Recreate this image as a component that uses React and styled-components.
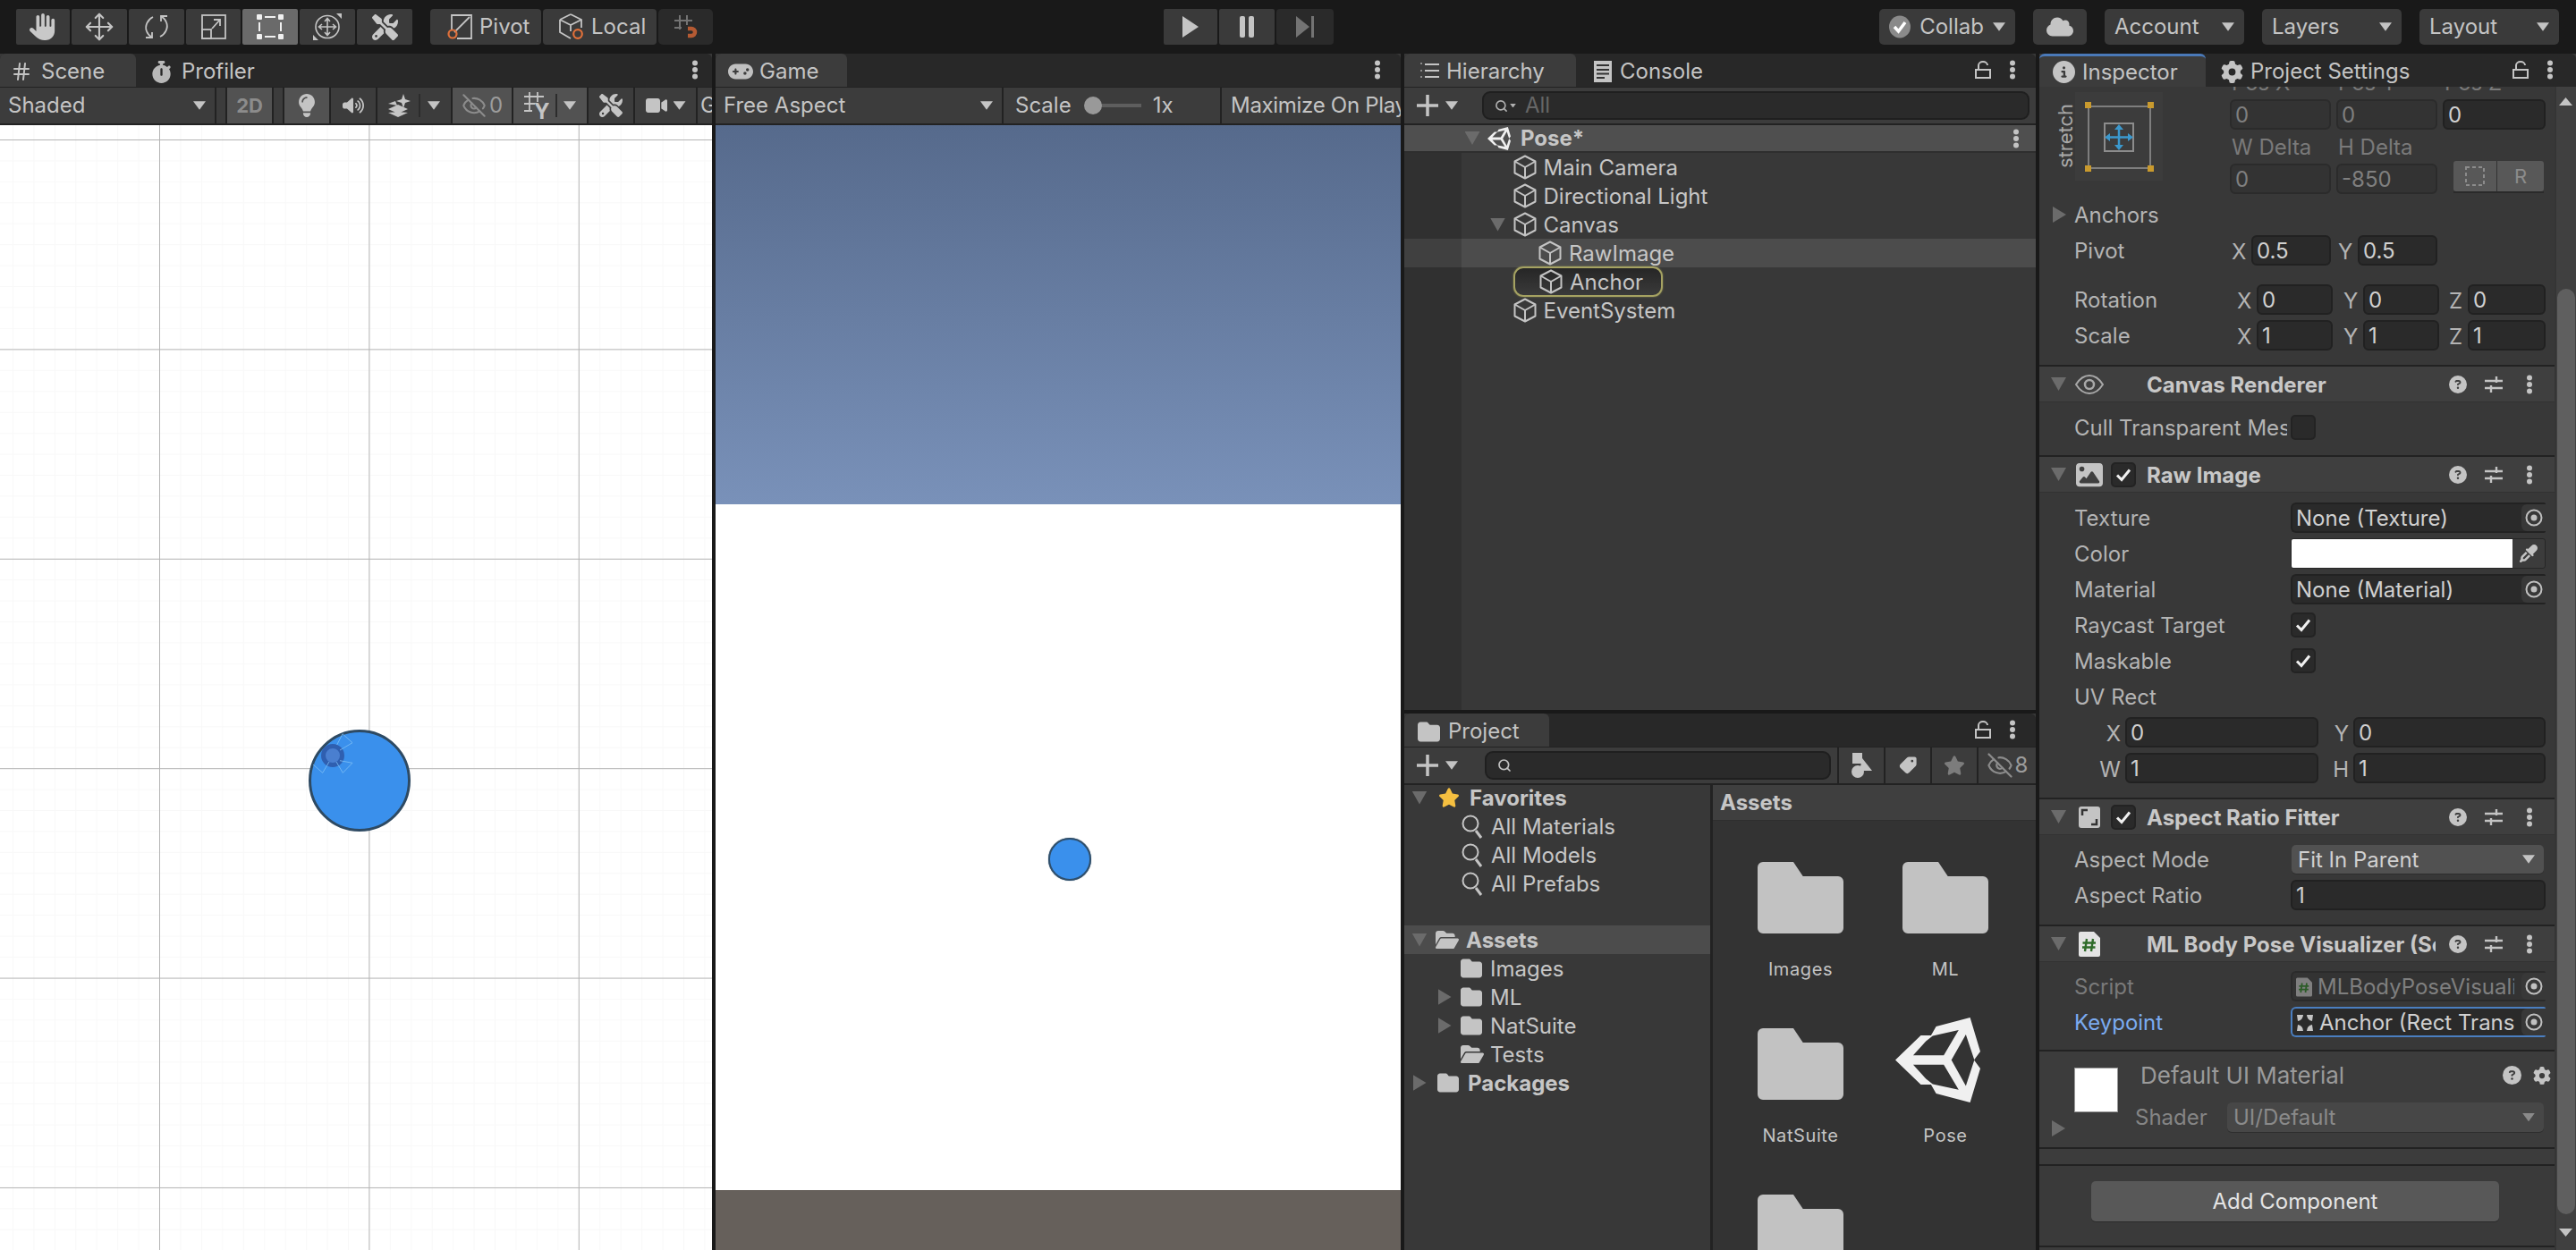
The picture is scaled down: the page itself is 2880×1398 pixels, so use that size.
import React from 'react';
import styled, { createGlobalStyle } from 'styled-components';
import { FaHand, FaScrewdriverWrench, FaCloud, FaLightbulb, FaVolumeHigh, FaVideo, FaGamepad, FaCircleInfo, FaGear, FaFolder, FaCircleQuestion, FaEyeDropper, FaImage, FaTag, FaStar, FaFolderOpen, FaStopwatch } from 'react-icons/fa6';
import { Move, Hash, EyeOff, Search } from 'lucide-react';

const Global = createGlobalStyle`
  * { box-sizing: border-box; }
  svg { flex: none; }
  html, body { margin: 0; padding: 0; background: #191919; overflow: hidden; }
  body { font-family: Inter, "Noto Sans", "Liberation Sans", sans-serif; font-size: 24px; color: #c4c4c4; }
`;

const Screen = styled.div`
  width: 2880px; height: 1398px; display: flex; flex-direction: column; background: #191919; overflow: hidden;
`;
const TopBar = styled.header`
  height: 60px; flex: none; display: flex; align-items: flex-start; padding: 10px 0 0 18px;
`;
const TopGroup = styled.div`
  display: flex; gap: ${p => p.$gap ?? 2}px; margin-left: ${p => p.$ml ?? 0}px;
`;
const TopBtn = styled.div`
  width: ${p => p.$w}px; height: 40px; display: flex; align-items: center; justify-content: ${p => p.$left ? 'flex-start' : 'center'};
  gap: 6px; padding-left: ${p => p.$pl ?? 0}px; flex: none;
  background: ${p => p.$active ? '#6a6a6a' : p.$dim ? '#2a2a2a' : '#3a3a3a'};
  border-radius: ${p => p.$r ?? 2}px; color: ${p => p.$active ? '#f0f0f0' : '#c4c4c4'}; line-height: 40px;
`;
const MenuBtn = styled(TopBtn)`
  justify-content: space-between; padding: 0 11px; border-radius: 5px;
`;
const Panels = styled.main`
  flex: 1; display: flex; gap: 4px; min-height: 0;
`;
const Panel = styled.section`
  width: ${p => p.$w}px; flex: ${p => p.$grow ? '1' : 'none'}; height: ${p => p.$h ? p.$h + 'px' : '100%'};
  min-height: 0; display: flex; flex-direction: column; overflow: hidden; position: relative; background: #383838;
`;
const Stack = styled.div`
  width: ${p => p.$w}px; flex: none; display: flex; flex-direction: column; gap: 4px; height: 100%;
`;
const TabStrip = styled.div`
  height: 37px; flex: none; display: flex; align-items: stretch; background: #282828; border-radius: 6px 6px 0 0; position: relative; z-index: 2;
`;
const Tab = styled.div`
  width: ${p => p.$w}px; flex: none; display: flex; align-items: center; gap: ${p => p.$gap ?? 9}px; padding: ${p => p.$accent ? 1 : 3}px 0 0 ${p => p.$pl ?? 14}px;
  background: ${p => p.$active ? '#3c3c3c' : 'transparent'}; border-radius: 6px 6px 0 0; white-space: nowrap; line-height: 34px;
  border-top: ${p => p.$accent ? '3px solid #4a79b8' : 'none'};
  color: #c4c4c4;
`;
const TabTools = styled.div`
  margin-left: auto; display: flex; align-items: center; gap: ${p => p.$gap ?? 17}px; padding-right: ${p => p.$pr ?? 15}px; padding-bottom: 2px;
`;
const Toolbar = styled.div`
  height: 43px; flex: none; display: flex; gap: 2px; background: ${p => p.$flat ? '#3c3c3c' : '#222'}; border-top: 1px solid #222; border-bottom: 2px solid #222; overflow: hidden; position: relative;
`;
const Cell = styled.div`
  width: ${p => p.$w ? p.$w + 'px' : 'auto'}; flex: ${p => p.$grow ? '1' : 'none'}; display: flex; align-items: center; justify-content: ${p => p.$between ? 'space-between' : p.$left ? 'flex-start' : 'center'};
  gap: ${p => p.$gap ?? 6}px; padding: ${p => p.$pad ?? '0'}; background: ${p => p.$active ? '#525252' : '#3c3c3c'}; color: #c4c4c4; white-space: nowrap; overflow: hidden; line-height: 40px;
`;
const TwoD = styled.span`font-weight: 700; color: #8c8c8c; font-size: 22px;`;
const Count = styled.span`color: #9c9c9c;`;
const VSep = styled.i`width: 2px; height: 26px; background: #2c2c2c; display: block;`;
const TightText = styled.span`letter-spacing: -.3px;`;

const Caret = styled.i`
  display: block; flex: none; width: ${p => p.$s ?? 14}px; height: ${p => (p.$s ?? 14) * 0.68}px; background: ${p => p.$c ?? '#c4c4c4'};
  clip-path: polygon(0 0, 100% 0, 50% 100%);
`;
const Fold = styled.i`
  display: block; flex: none; background: #6b6b6b;
  width: ${p => p.$right ? 15 : 17}px; height: ${p => p.$right ? 18 : 15}px;
  clip-path: ${p => p.$right ? 'polygon(0 0, 100% 50%, 0 100%)' : 'polygon(0 0, 100% 0, 50% 100%)'};
`;

/* Scene view */
const SceneCanvas = styled.div`
  flex: 1; position: relative; overflow: hidden; background-color: #fff;
  background-image:
    linear-gradient(to right, #b4b4b4 1px, transparent 1px),
    linear-gradient(to bottom, #b4b4b4 1px, transparent 1px),
    linear-gradient(to right, #f8f8f8 1px, transparent 1px),
    linear-gradient(to bottom, #f8f8f8 1px, transparent 1px);
  background-size: 234.4px 234.4px, 234.4px 234.4px, 23.44px 23.44px, 23.44px 23.44px;
  background-position: 178px 16px, 178px 16px, 14px 16px, 14px 16px;
`;
const SceneBall = styled.svg`position: absolute; left: 340px; top: 670px;`;

/* Game view */
const GameView = styled.div`flex: 1; display: flex; flex-direction: column; min-height: 0;`;
const Sky = styled.div`height: 424px; flex: none; background: linear-gradient(#566a8c, #7991b9);`;
const Board = styled.div`height: 767px; flex: none; background: #fff; position: relative;`;
const Ground = styled.div`flex: 1; background: #66605b;`;
const GameBall = styled.div`
  position: absolute; left: 372px; top: 373px; width: 48px; height: 48px; border-radius: 50%;
  background: #3a90ec; border: 2px solid #2f4f6c; box-shadow: 0 0 1px #2f4f6c;
`;
const ScaleTrack = styled.div`width: 50px; height: 4px; background: #5e5e5e; margin-left: -6px; margin-right: 6px;`;
const Knob = styled.i`display:block; width: 20px; height: 20px; border-radius: 50%; background: #999; margin-left: 14px; flex: none; z-index: 1;`;
const ScaleValue = styled.span`margin-left: 7px;`;

/* Hierarchy */
const SearchBox = styled.div`
  position: absolute; left: ${p => p.$l}px; top: ${p => p.$t}px; width: ${p => p.$w}px; height: ${p => p.$h}px; display: flex; align-items: center; gap: 2px; padding-left: 12px;
  background: #2a2a2a; border: 2px solid #1f1f1f; border-radius: 9px; color: #666; line-height: 28px;
`;
const SearchText = styled.span`margin-left: 8px;`;
const PlusBtn = styled.div`
  display: flex; align-items: center; gap: 8px; padding-left: 14px; color: #c4c4c4;
`;
const HierList = styled.div`
  flex: 1; background: linear-gradient(to right, #303030 64px, #383838 64px);
`;
const HierRow = styled.div`
  height: ${p => p.$scene ? 31 : 32}px; display: flex; align-items: center; padding-left: ${p => 66 + (p.$depth ?? 0) * 28.5}px; position: relative;
  background: ${p => p.$scene ? '#4f4f4f' : p.$hover ? 'linear-gradient(to right, #404040 64px, #4c4c4c 64px)' : 'transparent'};
  border-bottom: ${p => p.$scene ? '2px solid #2e2e2e' : 'none'};
  font-weight: ${p => p.$scene ? 700 : 400}; white-space: nowrap; color: #c6c6c6;
`;
const FoldSlot = styled.div`width: 20px; flex: none; display: flex; justify-content: center;`;
const RowIcon = styled.div`margin-left: 7px; width: 26px; flex: none; display: flex; justify-content: center; align-items: center; margin-right: ${p => p.$mr ?? 8}px;`;
const PingPill = styled.div`
  display: flex; align-items: center; height: 34px; width: 167px; border: 2px solid #a5a262; border-radius: 11px; box-shadow: 0 0 2px #8a8850;
  background: linear-gradient(#262626, #3a3a3a); margin-left: -1px;
`;
const RowDots = styled.div`position: absolute; right: 18px; top: 3px;`;

/* Project */
const ProjectBody = styled.div`flex: 1; display: flex; min-height: 0; background: #383838;`;
const TreeCol = styled.div`width: 345px; flex: none; border-right: 3px solid #222;`;
const TreeInner = styled.div`margin-top: -2px;`;
const TreeRow = styled.div`
  height: 32px; display: flex; align-items: center; padding-left: ${p => p.$pl}px; white-space: nowrap; gap: ${p => p.$gap ?? 7}px;
  background: ${p => p.$hover ? '#4c4c4c' : 'transparent'}; font-weight: ${p => p.$bold ? 700 : 400}; color: #c6c6c6;
`;
const TreeSpacer = styled.div`height: 31px;`;
const FoldBox = styled.div`width: ${p => p.$w ?? 20}px; flex: none; display: flex; justify-content: center;`;
const AssetCol = styled.div`flex: 1; display: flex; flex-direction: column; background: #333; min-width: 0;`;
const AssetHead = styled.div`height: 40px; flex: none; background: #3f3f3f; padding-left: 8px; line-height: 40px; font-weight: 700; border-bottom: 1px solid #2e2e2e; color: #c6c6c6;`;
const AssetGrid = styled.div`display: grid; grid-template-columns: repeat(2, 162px); grid-auto-rows: 186px; padding: 46px 0 0 17px;`;
const AssetTile = styled.div`display: flex; flex-direction: column; align-items: center;`;
const AssetIcon = styled.div`height: 80px; display: flex; align-items: center; justify-content: center; padding-bottom: ${p => p.$logo ? 9 : 0}px; margin-right: ${p => p.$logo ? 17 : 0}px;`;
const AssetLabel = styled.div`margin-top: 26px; line-height: 28px; font-size: 20px; letter-spacing: .6px; color: #c4c4c4;`;
const ToolGap = styled.div`margin-left: auto; display: flex; gap: 2px;`;

/* Inspector */
const InspectorBody = styled.div`flex: 1; display: flex; min-height: 0; overflow: hidden;`;
const InspectorCol = styled.div`width: 576px; flex: none; background: #383838; overflow: hidden; display: flex; flex-direction: column;`;
const ScrollRail = styled.div`
  flex: 1; background: #404040; border-left: 2px solid #353535; display: flex; flex-direction: column; align-items: center; padding-top: 226px; position: relative;
`;
const ScrollThumb = styled.div`width: 20px; height: 1035px; background: #5f5f5f; border-radius: 10px;`;
const ScrollArrow = styled.i`
  position: absolute; left: 3px; ${p => p.$up ? 'top: 12px' : 'bottom: 15px'}; width: 15px; height: 9px; background: #c4c4c4;
  clip-path: ${p => p.$up ? 'polygon(50% 0, 100% 100%, 0 100%)' : 'polygon(0 0, 100% 0, 50% 100%)'};
`;
const TransformTop = styled.div`display: flex; height: 120px; flex: none;`;
const PresetCol = styled.div`width: 213px; flex: none; position: relative; overflow: hidden;`;
const StretchClip = styled.div`
  position: absolute; left: 54px; top: -22px; width: 70px; line-height: 26px; text-align: center; font-size: 22px; color: #a0a0a0;
`;
const StretchSide = styled.div`
  position: absolute; left: 14px; top: 41px; width: 30px; height: 28px; line-height: 28px; white-space: nowrap; font-size: 22px; color: #a8a8a8; display: flex; justify-content: center; transform: rotate(-90deg);
`;
const PresetBox = styled.div`position: absolute; left: 40px; top: 6px; width: 98px; height: 99px; background: #3c3c3c;`;
const PresetIcon = styled.svg`display: block;`;
const FieldsCol = styled.div`width: 353px; flex: none; display: flex; flex-direction: column;`;
const ClipLabels = styled.div`height: 14px; overflow: hidden; display: flex; color: #7a7a7a; line-height: 24px; flex: none;`;
const ClipLabel = styled.span`width: ${p => p.$w}px; margin-top: -16px; padding-left: 2px; height: 24px;`;
const FieldRow = styled.div`display: flex; gap: 6px; height: 34px; flex: none;`;
const DeltaLabels = styled.div`height: 38px; display: flex; align-items: center; color: #7a7a7a; padding-left: 2px; flex: none;`;
const DeltaLabel = styled.span`width: 119px;`;
const Field = styled.div`
  width: ${p => p.$w ? p.$w + 'px' : 'auto'}; flex: ${p => p.$grow ? 1 : 'none'}; height: 34px; line-height: 31px; padding-left: ${p => p.$pl ?? 4}px;
  background: ${p => p.$off ? '#333' : '#2a2a2a'}; border: 2px solid ${p => p.$off ? '#2b2b2b' : '#212121'}; border-radius: 6px; color: ${p => p.$off ? '#7f7f7f' : '#d0d0d0'};
  white-space: nowrap; overflow: hidden;
`;
const RectBtns = styled.div`display: flex; margin-left: 12px; margin-top: -3px; height: 36px; border-bottom: 2px solid #2a2a2a;`;
const RectBtn = styled.div`
  width: ${p => p.$w}px; display: flex; align-items: center; justify-content: center; background: #585858; color: #8c8c8c; border-radius: ${p => p.$r ?? '3px'}; font-size: 22px;
  border-left: ${p => p.$split ? '1px solid #333' : 'none'};
`;
const Rows = styled.div`display: flex; flex-direction: column; gap: ${p => p.$gap ?? 6}px; padding: ${p => p.$pad ?? '0'}; flex: none;`;
const Row = styled.div`
  height: ${p => p.$h ?? 34}px; display: flex; align-items: center; padding-left: ${p => p.$pl ?? 39}px; padding-right: 10px; margin-top: ${p => p.$mt ?? 0}px; flex: none; position: relative;
`;
const Label = styled.div`
  width: ${p => p.$w ?? 242}px; flex: none; white-space: nowrap; overflow: hidden; color: ${p => p.$c ?? '#b4b4b4'}; line-height: 34px; margin: 2px ${p => p.$mr ?? 0}px 0 0;
`;
const Axis = styled.div`
  width: ${p => p.$w ?? 22}px; flex: none; color: #b4b4b4; margin: 2px 0 0 ${p => p.$ml ?? 0}px; text-align: ${p => p.$end ? 'right' : 'left'}; padding-right: ${p => p.$end ? 5 : 0}px;
`;
const AnchorsFold = styled.div`position: absolute; left: 15px; top: 9px;`;
const Spacer = styled.div`height: ${p => p.$h}px; flex: none;`;
const Divider = styled.div`height: 2px; flex: none; background: #222;`;
const CompHead = styled.div`
  height: ${p => p.$h ?? 40}px; flex: none; display: flex; align-items: center; background: #3f3f3f; border-bottom: 1px solid #323232;
`;
const HeadFold = styled.div`width: 36px; flex: none; padding-left: 13px;`;
const HeadIcon = styled.div`width: 40px; flex: none; display: flex; justify-content: center; align-items: center;`;
const HeadCheckSlot = styled.div`width: 44px; flex: none; padding-left: 4px;`;
const HeadTitle = styled.div`
  width: 323px; flex: none; font-weight: 700; color: #c8c8c8; white-space: nowrap; overflow: hidden; margin: 2px 5px 0 0;
`;
const HeadAct = styled.div`width: 40px; flex: none; display: flex; justify-content: center; align-items: center;`;
const Check = styled.div`
  width: 28px; height: 28px; flex: none; background: #2a2a2a; border: 2px solid #232323; border-radius: 5px; display: flex; align-items: center; justify-content: center;
`;
const ObjField = styled.div`
  width: 285px; height: 34px; flex: none; display: flex; align-items: stretch; background: ${p => p.$off ? '#333' : '#2a2a2a'};
  border: 2px solid ${p => p.$focus ? '#4a7ec0' : p.$off ? '#2b2b2b' : '#222'}; border-right: none; border-radius: 6px 2px 2px 6px; overflow: hidden; color: ${p => p.$off ? '#7f7f7f' : '#d0d0d0'};
`;
const ObjValue = styled.div`flex: 1; padding: 2px 0 0 4px; margin-right: 8px; line-height: 30px; white-space: nowrap; overflow: hidden; display: flex; align-items: center; gap: 6px; min-width: 0;`;
const ObjPick = styled.div`width: 27px; flex: none; background: #383838; border-radius: 6px 0 0 6px; display: flex; align-items: center; justify-content: center;`;
const ColorField = styled.div`
  width: 285px; height: 34px; flex: none; display: flex; background: #3c3c3c; border: 1px solid #262626; border-radius: 3px; overflow: hidden;
`;
const Swatch = styled.div`width: 247px; background: #fff;`;
const Dropper = styled.div`flex: 1; display: flex; align-items: center; justify-content: center;`;
const Dropdown = styled.div`
  width: ${p => p.$w ?? 282}px; height: ${p => p.$h ?? 32}px; flex: none; display: flex; align-items: center; justify-content: space-between; padding: 0 10px 0 7px; margin-left: ${p => p.$ml ?? 0}px;
  background: ${p => p.$off ? '#474747' : '#515151'}; border-radius: 5px; color: ${p => p.$off ? '#8a8a8a' : '#d0d0d0'};
  box-shadow: 0 1px 0 #2e2e2e; white-space: nowrap;
`;
const MatBlock = styled.div`height: 107px; flex: none; background: #3c3c3c; position: relative;`;
const MatThumb = styled.div`position: absolute; left: 39px; top: 18px; width: 49px; height: 50px; background: #fff; border: 1px solid #999;`;
const MatTitle = styled.div`position: absolute; left: 113px; top: 9px; line-height: 36px; font-size: 26px; color: #9a9a9a;`;
const MatActions = styled.div`position: absolute; right: 4px; top: 16px; display: flex; gap: 13px; align-items: center;`;
const MatFold = styled.div`position: absolute; left: 14px; top: 77px;`;
const ShaderRow = styled.div`position: absolute; left: 107px; top: 57px; display: flex; align-items: center;`;
const ShaderLabel = styled.div`width: 103px; color: #858585;`;
const BlankBlock = styled.div`height: 17px; flex: none; background: #3c3c3c;`;
const AddArea = styled.div`flex: 1; padding: 17px 0 0 58px; background: #3a3a3a;`;
const AddBtn = styled.div`
  width: 456px; height: 45px; display: flex; align-items: center; justify-content: center; background: #585858; border-radius: 5px; color: #e4e4e4; box-shadow: 0 1px 0 #2c2c2c;
`;
const InspectorFoot = styled.div`height: 5px; flex: none; background: #3c3c3c; border-top: 2px solid #222;`;

/* ---------- drawings ---------- */
const Dots = ({ c = '#c4c4c4' }) => (
  <svg width="8" height="22" viewBox="0 0 8 22"><circle cx="4" cy="3.5" r="3" fill={c} /><circle cx="4" cy="11" r="3" fill={c} /><circle cx="4" cy="18.5" r="3" fill={c} /></svg>
);
const Lock = () => (
  <svg width="18" height="20" viewBox="0 0 18 20" fill="none" stroke="#c4c4c4" strokeWidth="2"><rect x="1" y="10" width="16" height="9" /><path d="M4 10V5a5 4 0 0 1 10 0" /></svg>
);
const Cube = () => (
  <svg width="26" height="28" viewBox="0 0 26 28" fill="none" stroke="#c4c4c4" strokeWidth="2" strokeLinejoin="round"><path d="M13 1.5L24.5 7.5V20.5L13 26.5L1.5 20.5V7.5Z" /><path d="M1.5 7.5L13 14L24.5 7.5M13 14V26.5" /></svg>
);
const UnityLogo = ({ s = 96, c = '#f0f0f0' }) => (
  <svg width={s} height={s} viewBox="0 0 100 100"><path fillRule="evenodd" fill={c} d="M0 50L30 21H42L48 10.5L88 0L100 40L92.6 50L100 60L88 100L48 89.5L42 79H30ZM21 44.5H57L74.5 14.7L44 21.5L36 28ZM83 20L66 50L83 80.5L93 50ZM21 55.5L36 72L44 78.5L74.5 85L57 55.5Z" /></svg>
);
const BigFolder = () => (
  <svg width="96" height="80" viewBox="0 0 96 80"><path fill="#c2c2c2" d="M6 0H40L50.7 16H90a6 6 0 0 1 6 6V74a6 6 0 0 1-6 6H6a6 6 0 0 1-6-6V6a6 6 0 0 1 6-6Z" /></svg>
);
const Help = ({ s = 20 }) => <FaCircleQuestion size={s} color="#c4c4c4" />;
const Sliders = () => (
  <svg width="22" height="20" viewBox="0 0 22 20" fill="none" stroke="#c4c4c4" strokeWidth="2.4"><path d="M1 6H21M1 14H21M14 1V8M8 11V19" /></svg>
);
const Target = () => (
  <svg width="20" height="20" viewBox="0 0 20 20"><circle cx="10" cy="10" r="8.5" fill="none" stroke="#c0c0c0" strokeWidth="2" /><circle cx="10" cy="10" r="3.5" fill="#c0c0c0" /></svg>
);
const Tick = ({ s = 18 }) => (
  <svg width={s} height={s} viewBox="0 0 18 18" fill="none" stroke="#f0f0f0" strokeWidth="3"><path d="M2 9.5L7 14.5L16 3.5" /></svg>
);
const Mag = () => (
  <svg width="24" height="28" viewBox="0 0 24 28" fill="none" stroke="#c4c4c4" strokeWidth="2"><circle cx="10" cy="11" r="8.5" /><path d="M16 19L22 27" strokeWidth="3" /></svg>
);
const EyeCross = ({ w = 28, c = '#8c8c8c' }) => <EyeOff size={w} color={c} strokeWidth={1.8} />;
const ScriptIcon = ({ w = 24, h = 28, bg = '#e4e4e4', fg = '#2f6b2a' }) => (
  <svg width={w} height={h} viewBox="0 0 24 28"><path fill={bg} d="M2 0H17L24 7V26a2 2 0 0 1-2 2H2a2 2 0 0 1-2-2V2a2 2 0 0 1 2-2Z" /><path fill="none" stroke={fg} strokeWidth="2.4" d="M9 8L7 22M16 8L14 22M4.5 12.5H19M4 17.5H18.5" /></svg>
);

const RotateTool = () => (
  <svg width="28" height="28" viewBox="0 0 28 28" fill="none" stroke="#c4c4c4" strokeWidth="1.8"><path d="M10 3C4 6 .5 13 3 19C4 22 6 24 9 26" /><path d="M2 26H9V20" /><path d="M18 25C24 22 27.5 15 25 9C24 6 22 4 19 2" /><path d="M26 2H19V8" /></svg>
);
const ScaleTool = () => (
  <svg width="28" height="28" viewBox="0 0 28 28" fill="none" stroke="#c4c4c4" strokeWidth="1.8"><rect x="1" y="1" width="26" height="26" /><rect x="1" y="17" width="10" height="10" /><path d="M12 16L21 6M14 6H21V13" /></svg>
);
const RectTool = () => (
  <svg width="30" height="28" viewBox="0 0 30 28" fill="#f0f0f0"><rect x="0" y="0" width="6" height="6" rx="1" /><rect x="24" y="0" width="6" height="6" rx="1" /><rect x="0" y="22" width="6" height="6" rx="1" /><rect x="24" y="22" width="6" height="6" rx="1" /><path d="M9 2h12v2H9zM9 24h12v2H9zM2 9h2v10H2zM26 9h2v10h-2z" /></svg>
);
const TransformTool = () => (
  <svg width="34" height="30" viewBox="0 0 34 30" fill="none" stroke="#c4c4c4" strokeWidth="1.6"><ellipse cx="17" cy="15" rx="13" ry="12.5" /><path d="M17 6V24M8 15H26M14 9L17 5.5L20 9M14 21L17 24.5L20 21M11 12L7.5 15L11 18M23 12L26.5 15L23 18" /><path fill="#c4c4c4" stroke="none" d="M27 0H33V6ZM1 24L7 30H1Z" /></svg>
);
const PivotIcon = () => (
  <svg width="30" height="28" viewBox="0 0 30 28" fill="none"><path d="M5 18V1H27V27H11" stroke="#c4c4c4" strokeWidth="1.8" /><path d="M8 20L25 3" stroke="#c4c4c4" strokeWidth="1.8" /><circle cx="6" cy="22" r="4.5" stroke="#e0703a" strokeWidth="2.2" /></svg>
);
const LocalIcon = () => (
  <svg width="30" height="30" viewBox="0 0 30 30" fill="none" stroke="#c4c4c4" strokeWidth="1.8"><path d="M13 1L25 7V16M1 7L13 1M1 7V21L13 28M1 7L13 13L25 7M13 13V20" /><circle cx="21" cy="23" r="4.8" stroke="#e0703a" strokeWidth="2.2" /></svg>
);
const SnapIcon = () => (
  <svg width="28" height="28" viewBox="0 0 28 28" fill="none"><path d="M7 1V17M15 1V12M1 7H21M1 15H9" stroke="#737373" strokeWidth="2" /><path d="M16 16H20A4 4 0 0 1 20 24H16" stroke="#b45a33" strokeWidth="4.5" /></svg>
);
const PlayIcon = () => <svg width="18" height="24" viewBox="0 0 18 24"><path fill="#c4c4c4" d="M0 0L18 12L0 24Z" /></svg>;
const PauseIcon = () => <svg width="16" height="24" viewBox="0 0 16 24"><rect x="0" y="0" width="6" height="24" rx="2" fill="#c4c4c4" /><rect x="10" y="0" width="6" height="24" rx="2" fill="#c4c4c4" /></svg>;
const StepIcon = () => <svg width="20" height="24" viewBox="0 0 20 24"><path fill="#737373" d="M0 0L15 12L0 24Z" /><rect x="17" y="0" width="3" height="24" fill="#737373" /></svg>;
const CollabIcon = () => (
  <svg width="24" height="26" viewBox="0 0 24 26"><ellipse cx="12" cy="13" rx="12" ry="12.5" fill="#8a8a8a" /><path d="M6 13L10.5 18L18 8" fill="none" stroke="#fff" strokeWidth="3.5" /></svg>
);
const FxIcon = () => (
  <svg width="26" height="26" viewBox="0 0 26 26" fill="#c4c4c4"><path d="M11 12L22 17L11 22L0 17ZM11 20L22 21L11 26L0 21Z" /><path d="M17 0L19 6L25 8L19 10L17 16L15 10L9 8L15 6Z" /><path d="M0 11L8 8L10 13Z" /></svg>
);
const GridY = () => (
  <svg width="28" height="32" viewBox="0 0 28 32"><path d="M6 1V22M15 1V12M0 6H22M0 14H12M0 22H9" fill="none" stroke="#c4c4c4" strokeWidth="1.8" /><text x="11" y="31" fontFamily="Inter, sans-serif" fontWeight="700" fontSize="24" fill="#c4c4c4">Y</text></svg>
);
const ConsoleIcon = () => (
  <svg width="20" height="24" viewBox="0 0 20 24"><rect width="20" height="24" fill="#c4c4c4" /><path d="M3 5H17M3 10H17M3 14.5H17M3 19H12" stroke="#333" strokeWidth="1.8" /></svg>
);
const HierIcon = () => (
  <svg width="22" height="20" viewBox="0 0 22 20"><path d="M6 2H22M6 9H22M6 16H22" stroke="#c4c4c4" strokeWidth="2" /><path d="M1 1H3M1 9H3M1 16H3" stroke="#8a8a8a" strokeWidth="2" /></svg>
);
const PlusIcon = () => (
  <svg width="24" height="24" viewBox="0 0 24 24"><path d="M12 0V24M0 12H24" stroke="#c4c4c4" strokeWidth="3.5" /></svg>
);
const EyeIcon = () => (
  <svg width="32" height="22" viewBox="0 0 32 22" fill="none" stroke="#a8a8a8" strokeWidth="2"><path d="M1 11C6 3 11 1 16 1S26 3 31 11C26 19 21 21 16 21S6 19 1 11Z" /><circle cx="16" cy="11" r="5" strokeWidth="2.5" /></svg>
);
const AspectIcon = () => (
  <svg width="24" height="24" viewBox="0 0 24 24"><rect width="24" height="24" rx="3" fill="#c4c4c4" /><path d="M4 10V4H10M20 14V20H14" fill="none" stroke="#333" strokeWidth="2.5" /></svg>
);
const AnchorMark = () => (
  <svg width="20" height="22" viewBox="0 0 20 22" fill="#c4c4c4"><path d="M1 2L8 2A7 7 0 0 1 2 9ZM19 2L12 2A7 7 0 0 0 18 9ZM1 20L8 20A7 7 0 0 0 2 13ZM19 20L12 20A7 7 0 0 1 18 13Z" /></svg>
);
const TypeFilter = () => (
  <svg width="24" height="28" viewBox="0 0 24 28" fill="#c4c4c4"><rect x="2" y="0" width="11" height="12" /><path d="M13 6L24 20H10Z" /><circle cx="8" cy="21" r="7" /></svg>
);
const OpenMark = () => <FaFolderOpen size={26} color="#c4c4c4" />;
const MiniFolder = () => <FaFolder size={24} color="#c4c4c4" />;
const RectSelect = () => (
  <svg width="22" height="22" viewBox="0 0 22 22" fill="none" stroke="#8c8c8c" strokeWidth="2" strokeDasharray="4 3"><rect x="1" y="1" width="20" height="20" /></svg>
);
const TagIcon = styled(FaTag)`transform: rotate(90deg);`;

const HierItem = ({ depth, name, fold, hover }) => (
  <HierRow $depth={depth} $hover={hover}>
    <FoldSlot>{fold && <Fold />}</FoldSlot>
    <RowIcon><Cube /></RowIcon>
    {name}
  </HierRow>
);

const Prop = ({ name, children, c, lw }) => (
  <Row><Label $c={c} $w={lw}>{name}</Label>{children}</Row>
);
const ObjProp = ({ name, icon, value, off, focus, c }) => (
  <Prop name={name} c={c}>
    <ObjField $off={off} $focus={focus}>
      <ObjValue>{icon}{value}</ObjValue>
      <ObjPick><Target /></ObjPick>
    </ObjField>
  </Prop>
);
const Header = ({ icon, checked, title }) => (
  <CompHead>
    <HeadFold><Fold /></HeadFold>
    <HeadIcon>{icon}</HeadIcon>
    <HeadCheckSlot>{checked && <Check><Tick /></Check>}</HeadCheckSlot>
    <HeadTitle>{title}</HeadTitle>
    <HeadAct><Help /></HeadAct>
    <HeadAct><Sliders /></HeadAct>
    <HeadAct><Dots /></HeadAct>
  </CompHead>
);

export default function App() {
  return (
    <Screen>
      <Global />
      <TopBar>
        <TopGroup>
          <TopBtn $w={60}><FaHand size={30} color="#c8c8c8" /></TopBtn>
          <TopBtn $w={62}><Move size={34} strokeWidth={1.5} color="#c4c4c4" /></TopBtn>
          <TopBtn $w={62}><RotateTool /></TopBtn>
          <TopBtn $w={61}><ScaleTool /></TopBtn>
          <TopBtn $w={62} $active><RectTool /></TopBtn>
          <TopBtn $w={62}><TransformTool /></TopBtn>
          <TopBtn $w={62}><FaScrewdriverWrench size={29} color="#c8c8c8" /></TopBtn>
        </TopGroup>
        <TopGroup $ml={20}>
          <TopBtn $w={124} $left $pl={19} $r={4}><PivotIcon />Pivot</TopBtn>
          <TopBtn $w={127} $left $pl={18} $r={4}><LocalIcon />Local</TopBtn>
          <TopBtn $w={61} $dim $r={5}><SnapIcon /></TopBtn>
        </TopGroup>
        <TopGroup $ml={504}>
          <TopBtn $w={60}><PlayIcon /></TopBtn>
          <TopBtn $w={62}><PauseIcon /></TopBtn>
          <TopBtn $w={64} $dim $r={4}><StepIcon /></TopBtn>
        </TopGroup>
        <TopGroup $ml={610} $gap={20}>
          <MenuBtn $w={152}><CollabIcon /><span>Collab</span><Caret /></MenuBtn>
          <TopBtn $w={60} $r={5}><FaCloud size={30} color="#c4c4c4" /></TopBtn>
          <MenuBtn $w={156}><span>Account</span><Caret /></MenuBtn>
          <MenuBtn $w={156}><span>Layers</span><Caret /></MenuBtn>
          <MenuBtn $w={156}><span>Layout</span><Caret /></MenuBtn>
        </TopGroup>
      </TopBar>
      <Panels>
        <Panel $w={796}>
          <TabStrip>
            <Tab $w={152} $active $gap={10} $pl={12}><Hash size={24} color="#c4c4c4" />Scene</Tab>
            <Tab $w={180} $pl={16} $gap={10}><FaStopwatch size={25} color="#b8b8b8" />Profiler</Tab>
            <TabTools><Dots /></TabTools>
          </TabStrip>
          <Toolbar>
            <Cell $w={240} $between $pad="0 10px 0 9px"><span>Shaded</span><Caret /></Cell>
            <Cell $w={10} />
            <Cell $w={50} $active><TwoD>2D</TwoD></Cell>
            <Cell $w={10} />
            <Cell $w={50} $active><FaLightbulb size={26} color="#c4c4c4" /></Cell>
            <Cell $w={50}><FaVolumeHigh size={24} color="#c4c4c4" /></Cell>
            <Cell $w={82} $gap={8}><FxIcon /><VSep /><Caret /></Cell>
            <Cell $w={66} $active $gap={3}><EyeCross /><Count>0</Count></Cell>
            <Cell $w={82} $active $gap={7}><GridY /><VSep /><Caret /></Cell>
            <Cell $w={50}><FaScrewdriverWrench size={26} color="#c4c4c4" /></Cell>
            <Cell $w={68} $gap={7}><FaVideo size={24} color="#c4c4c4" /><Caret /></Cell>
            <Cell $grow $left $pad="0 0 0 3px"><span>Gizmos</span></Cell>
          </Toolbar>
          <SceneCanvas>
            <SceneBall width="124" height="124" viewBox="0 0 124 124">
              <circle cx="62" cy="63" r="55.5" fill="#3a90ec" stroke="#2e4a63" strokeWidth="3" />
              <circle cx="32" cy="35" r="10.5" fill="#4a7fd0" stroke="#2f5fb0" strokeWidth="5" />
              <path d="M36.7 23L43 10.7L54 20.7L40 29M40 40.7L54 43.3L43.3 54.3L36 42M10 45L20.7 54.3L28 42" fill="none" stroke="#7fc0f5" strokeWidth="0.8" />
            </SceneBall>
          </SceneCanvas>
        </Panel>
        <Panel $w={766}>
          <TabStrip>
            <Tab $w={147} $active $pl={14} $gap={7}><FaGamepad size={28} color="#c0c0c0" />Game</Tab>
            <TabTools $pr={22}><Dots /></TabTools>
          </TabStrip>
          <Toolbar>
            <Cell $w={320} $between $pad="0 10px 0 9px"><span>Free Aspect</span><Caret /></Cell>
            <Cell $w={242} $left $pad="0 0 0 13px" $gap={0}>
              <span>Scale</span><Knob /><ScaleTrack /><ScaleValue>1x</ScaleValue>
            </Cell>
            <Cell $grow $left $pad="0 0 0 10px"><TightText>Maximize On Play</TightText></Cell>
          </Toolbar>
          <GameView>
            <Sky />
            <Board><GameBall /></Board>
            <Ground />
          </GameView>
        </Panel>
        <Stack $w={706}>
          <Panel $h={734} $w={706}>
            <TabStrip>
              <Tab $w={192} $active $pl={17} $gap={8}><HierIcon />Hierarchy</Tab>
              <Tab $w={180} $pl={20} $gap={9}><ConsoleIcon />Console</Tab>
              <TabTools $gap={20} $pr={22}><Lock /><Dots /></TabTools>
            </TabStrip>
            <Toolbar $flat>
              <Cell $w={86} $left><PlusBtn><PlusIcon /><Caret /></PlusBtn></Cell>
              <SearchBox $l={87} $t={4} $w={612} $h={32}>
                <Search size={15} color="#b0b0b0" strokeWidth={2.6} /><Caret $s={7} $c="#b0b0b0" /><SearchText>All</SearchText>
              </SearchBox>
            </Toolbar>
            <HierList>
              <HierRow $scene $depth={0}>
                <FoldSlot><Fold /></FoldSlot>
                <RowIcon $mr={11}><UnityLogo s={26} /></RowIcon>
                Pose*
                <RowDots><Dots /></RowDots>
              </HierRow>
              <HierItem depth={1} name="Main Camera" />
              <HierItem depth={1} name="Directional Light" />
              <HierItem depth={1} name="Canvas" fold />
              <HierItem depth={2} name="RawImage" hover />
              <HierRow $depth={2}>
                <PingPill>
                  <FoldSlot />
                  <RowIcon><Cube /></RowIcon>
                  Anchor
                </PingPill>
              </HierRow>
              <HierItem depth={1} name="EventSystem" />
            </HierList>
          </Panel>
          <Panel $w={706} $grow>
            <TabStrip>
              <Tab $w={162} $active $pl={15} $gap={9}><FaFolder size={25} color="#c4c4c4" />Project</Tab>
              <TabTools $gap={20} $pr={22}><Lock /><Dots /></TabTools>
            </TabStrip>
            <Toolbar>
              <Cell $w={484} $left><PlusBtn><PlusIcon /><Caret /></PlusBtn></Cell>
              <SearchBox $l={90} $t={4} $w={387} $h={32}>
                <Search size={16} color="#c0c0c0" strokeWidth={2.6} />
              </SearchBox>
              <ToolGap>
                <Cell $w={50}><TypeFilter /></Cell>
                <Cell $w={50}><TagIcon size={22} color="#c4c4c4" /></Cell>
                <Cell $w={50}><FaStar size={24} color="#7c7c7c" /></Cell>
                <Cell $w={64} $gap={2}><EyeCross w={30} /><Count>8</Count></Cell>
              </ToolGap>
            </Toolbar>
            <ProjectBody>
              <TreeCol>
                <TreeInner>
                  <TreeRow $pl={7} $gap={11} $bold><FoldBox><Fold /></FoldBox><FaStar size={24} color="#f5bf40" />Favorites</TreeRow>
                  <TreeRow $pl={64} $gap={9}><Mag />All Materials</TreeRow>
                  <TreeRow $pl={64} $gap={9}><Mag />All Models</TreeRow>
                  <TreeRow $pl={64} $gap={9}><Mag />All Prefabs</TreeRow>
                  <TreeSpacer />
                  <TreeRow $pl={7} $gap={8} $hover $bold><FoldBox><Fold /></FoldBox><OpenMark />Assets</TreeRow>
                  <TreeRow $pl={63} $gap={9}><MiniFolder />Images</TreeRow>
                  <TreeRow $pl={36} $gap={9}><FoldBox $w={18}><Fold $right /></FoldBox><MiniFolder />ML</TreeRow>
                  <TreeRow $pl={36} $gap={9}><FoldBox $w={18}><Fold $right /></FoldBox><MiniFolder />NatSuite</TreeRow>
                  <TreeRow $pl={63} $gap={7}><OpenMark />Tests</TreeRow>
                  <TreeRow $pl={7} $gap={10} $bold><FoldBox><Fold $right /></FoldBox><MiniFolder />Packages</TreeRow>
                </TreeInner>
              </TreeCol>
              <AssetCol>
                <AssetHead>Assets</AssetHead>
                <AssetGrid>
                  <AssetTile><AssetIcon><BigFolder /></AssetIcon><AssetLabel>Images</AssetLabel></AssetTile>
                  <AssetTile><AssetIcon><BigFolder /></AssetIcon><AssetLabel>ML</AssetLabel></AssetTile>
                  <AssetTile><AssetIcon><BigFolder /></AssetIcon><AssetLabel>NatSuite</AssetLabel></AssetTile>
                  <AssetTile><AssetIcon $logo><UnityLogo s={95} /></AssetIcon><AssetLabel>Pose</AssetLabel></AssetTile>
                  <AssetTile><AssetIcon><BigFolder /></AssetIcon></AssetTile>
                </AssetGrid>
              </AssetCol>
            </ProjectBody>
          </Panel>
        </Stack>
        <Panel $w={600}>
          <TabStrip>
            <Tab $w={186} $active $accent $pl={15} $gap={8}><FaCircleInfo size={25} color="#c4c4c4" />Inspector</Tab>
            <Tab $w={240} $pl={17} $gap={8}><FaGear size={25} color="#c4c4c4" />Project Settings</Tab>
            <TabTools $gap={20} $pr={25}><Lock /><Dots /></TabTools>
          </TabStrip>
          <InspectorBody>
            <InspectorCol>
              <TransformTop>
                <PresetCol>
                  <StretchClip>stretch</StretchClip>
                  <StretchSide>stretch</StretchSide>
                  <PresetBox>
                    <PresetIcon width="98" height="99" viewBox="0 0 98 99">
                      <rect x="15" y="16" width="69" height="69" fill="none" stroke="#7e7e7e" strokeWidth="2" />
                      <path d="M11 11h7v7h-7zM81 11h7v7h-7zM11 82h7v7h-7zM81 82h7v7h-7z" fill="#c99a2e" />
                      <rect x="33" y="35" width="32" height="31" fill="none" stroke="#8c8c8c" strokeWidth="2" />
                      <path d="M49 39V62M36 50.5H62" stroke="#3b98cd" strokeWidth="2.5" />
                      <path d="M49 36L54 42H44ZM49 65L54 59H44ZM33 50.5L39 46V55ZM65 50.5L59 46V55Z" fill="#3b98cd" />
                    </PresetIcon>
                  </PresetBox>
                </PresetCol>
                <FieldsCol>
                  <ClipLabels>
                    <ClipLabel $w={119}>Pos X</ClipLabel>
                    <ClipLabel $w={119}>Pos Y</ClipLabel>
                    <ClipLabel $w={100}>Pos Z</ClipLabel>
                  </ClipLabels>
                  <FieldRow>
                    <Field $w={113} $off>0</Field>
                    <Field $w={113} $off>0</Field>
                    <Field $w={115}>0</Field>
                  </FieldRow>
                  <DeltaLabels><DeltaLabel>W Delta</DeltaLabel><DeltaLabel>H Delta</DeltaLabel></DeltaLabels>
                  <FieldRow>
                    <Field $w={113} $off>0</Field>
                    <Field $w={113} $off>-850</Field>
                    <RectBtns>
                      <RectBtn $w={48} $r="3px 0 0 3px"><RectSelect /></RectBtn>
                      <RectBtn $w={53} $r="0 3px 3px 0" $split>R</RectBtn>
                    </RectBtns>
                  </FieldRow>
                </FieldsCol>
              </TransformTop>
              <Row $mt={5} $h={36}><AnchorsFold><Fold $right /></AnchorsFold><Label>Anchors</Label></Row>
              <Row $mt={5}>
                <Label $w={176}>Pivot</Label>
                <Axis>X</Axis><Field $w={89}>0.5</Field>
                <Axis $ml={8}>Y</Axis><Field $w={89}>0.5</Field>
              </Row>
              <Row $mt={21}>
                <Label $w={182}>Rotation</Label>
                <Axis>X</Axis><Field $w={85}>0</Field>
                <Axis $ml={12}>Y</Axis><Field $w={85}>0</Field>
                <Axis $ml={11} $w={21}>Z</Axis><Field $w={87}>0</Field>
              </Row>
              <Row $mt={6}>
                <Label $w={182}>Scale</Label>
                <Axis>X</Axis><Field $w={85}>1</Field>
                <Axis $ml={12}>Y</Axis><Field $w={85}>1</Field>
                <Axis $ml={11} $w={21}>Z</Axis><Field $w={87}>1</Field>
              </Row>
              <Spacer $h={16} />
              <Divider />
              <Header icon={<EyeIcon />} title="Canvas Renderer" />
              <Rows $pad="14px 0 17px">
                <Row $h={28}><Label $w={238} $mr={4}>Cull Transparent Mesh</Label><Check /></Row>
              </Rows>
              <Divider />
              <Header icon={<FaImage size={30} color="#c4c4c4" />} checked title="Raw Image" />
              <Rows $pad="11px 0 16px">
                <ObjProp name="Texture" value="None (Texture)" />
                <Prop name="Color">
                  <ColorField><Swatch /><Dropper><FaEyeDropper size={20} color="#c4c4c4" /></Dropper></ColorField>
                </Prop>
                <ObjProp name="Material" value="None (Material)" />
                <Prop name="Raycast Target"><Check><Tick /></Check></Prop>
                <Prop name="Maskable"><Check><Tick /></Check></Prop>
                <Row><Label>UV Rect</Label></Row>
                <Row>
                  <Axis $w={57} $end>X</Axis>
                  <Field $w={216}>0</Field>
                  <Axis $w={39} $end>Y</Axis>
                  <Field $w={215}>0</Field>
                </Row>
                <Row>
                  <Axis $w={57} $end>W</Axis>
                  <Field $w={216}>1</Field>
                  <Axis $w={39} $end>H</Axis>
                  <Field $w={215}>1</Field>
                </Row>
              </Rows>
              <Divider />
              <Header icon={<AspectIcon />} checked title="Aspect Ratio Fitter" />
              <Rows $pad="10px 0 16px">
                <Prop name="Aspect Mode"><Dropdown $ml={1}><span>Fit In Parent</span><Caret /></Dropdown></Prop>
                <Prop name="Aspect Ratio"><Field $w={285}>1</Field></Prop>
              </Rows>
              <Divider />
              <Header icon={<ScriptIcon />} title="ML Body Pose Visualizer (Script)" />
              <Rows $pad="10px 0 14px">
                <ObjProp name="Script" c="#7a7a7a" off icon={<ScriptIcon w={18} h={24} bg="#7f7f7f" fg="#2c5c28" />} value="MLBodyPoseVisualizer" />
                <ObjProp name="Keypoint" c="#7babf0" focus icon={<AnchorMark />} value="Anchor (Rect Transform)" />
              </Rows>
              <Divider />
              <MatBlock>
                <MatThumb />
                <MatTitle>Default UI Material</MatTitle>
                <MatActions><Help s={21} /><FaGear size={20} color="#c4c4c4" /></MatActions>
                <MatFold><Fold $right /></MatFold>
                <ShaderRow>
                  <ShaderLabel>Shader</ShaderLabel>
                  <Dropdown $off $w={354} $h={33}><span>UI/Default</span><Caret $c="#8a8a8a" /></Dropdown>
                </ShaderRow>
              </MatBlock>
              <Divider />
              <BlankBlock />
              <Divider />
              <AddArea><AddBtn>Add Component</AddBtn></AddArea>
              <InspectorFoot />
            </InspectorCol>
            <ScrollRail>
              <ScrollArrow $up />
              <ScrollThumb />
              <ScrollArrow />
            </ScrollRail>
          </InspectorBody>
        </Panel>
      </Panels>
    </Screen>
  );
}
